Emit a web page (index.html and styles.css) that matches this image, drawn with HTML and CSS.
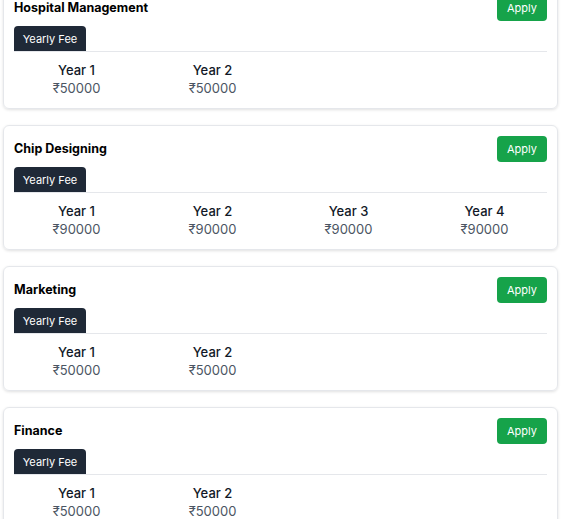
FILE: index.html
```html
<!DOCTYPE html>
<html lang="en">
<head>
<meta charset="utf-8">
<title>Courses</title>
<link rel="stylesheet" href="styles.css">
</head>
<body>
<div class="list">
  <div class="card">
    <div class="card-head">
      <h2 class="title">Hospital Management</h2>
      <button class="apply">Apply</button>
    </div>
    <div class="tabs"><span class="tab">Yearly Fee</span></div>
    <div class="fees">
      <div class="fee"><div class="year">Year 1</div><div class="price">₹50000</div></div>
      <div class="fee"><div class="year">Year 2</div><div class="price">₹50000</div></div>
    </div>
  </div>
  <div class="card">
    <div class="card-head">
      <h2 class="title">Chip Designing</h2>
      <button class="apply">Apply</button>
    </div>
    <div class="tabs"><span class="tab">Yearly Fee</span></div>
    <div class="fees">
      <div class="fee"><div class="year">Year 1</div><div class="price">₹90000</div></div>
      <div class="fee"><div class="year">Year 2</div><div class="price">₹90000</div></div>
      <div class="fee"><div class="year">Year 3</div><div class="price">₹90000</div></div>
      <div class="fee"><div class="year">Year 4</div><div class="price">₹90000</div></div>
    </div>
  </div>
  <div class="card">
    <div class="card-head">
      <h2 class="title">Marketing</h2>
      <button class="apply">Apply</button>
    </div>
    <div class="tabs"><span class="tab">Yearly Fee</span></div>
    <div class="fees">
      <div class="fee"><div class="year">Year 1</div><div class="price">₹50000</div></div>
      <div class="fee"><div class="year">Year 2</div><div class="price">₹50000</div></div>
    </div>
  </div>
  <div class="card">
    <div class="card-head">
      <h2 class="title">Finance</h2>
      <button class="apply">Apply</button>
    </div>
    <div class="tabs"><span class="tab">Yearly Fee</span></div>
    <div class="fees">
      <div class="fee"><div class="year">Year 1</div><div class="price">₹50000</div></div>
      <div class="fee"><div class="year">Year 2</div><div class="price">₹50000</div></div>
    </div>
  </div>
</div>
</body>
</html>
```
FILE: styles.css
```css
html, body {
  margin: 0;
  padding: 0;
  background: #ffffff;
}
body {
  font-family: Inter, "Noto Sans", sans-serif;
  color: #111827;
  overflow: hidden;
}
.list {
  display: flex;
  flex-direction: column;
  gap: 16px;
  margin: -16px 4px 0 3px;
}
.card {
  border: 1px solid #e5e7eb;
  border-radius: 6px;
  box-shadow: 0 1px 3px rgba(0,0,0,0.12);
  padding: 10px 10px 12px 10px;
  height: 125px;
  box-sizing: border-box;
}
.card-head {
  display: flex;
  justify-content: space-between;
  align-items: center;
  height: 26px;
}
.title {
  margin: 0 0 1px 0;
  font-size: 12.5px;
  font-weight: 700;
  color: #000;
}
.apply {
  width: 50px;
  height: 26px;
  border: none;
  border-radius: 4px;
  background: #16a34a;
  color: #fff;
  font-family: inherit;
  font-size: 11px;
  padding: 0;
}
.tabs {
  margin-top: 5px;
  border-bottom: 1px solid #e5e7eb;
  display: flex;
}
.tab {
  display: block;
  width: 72px;
  height: 25px;
  line-height: 26px;
  text-align: center;
  background: #1f2937;
  color: #fff;
  font-size: 11px;
  border-radius: 4px 4px 0 0;
}
.fees {
  display: grid;
  grid-template-columns: repeat(4, 1fr);
  column-gap: 11px;
  padding-top: 9px;
}
.fee {
  text-align: center;
  line-height: 18px;
  font-size: 13px;
}
.year {
  font-weight: 500;
  color: #111827;
}
.price {
  color: #4b5563;
}
```
